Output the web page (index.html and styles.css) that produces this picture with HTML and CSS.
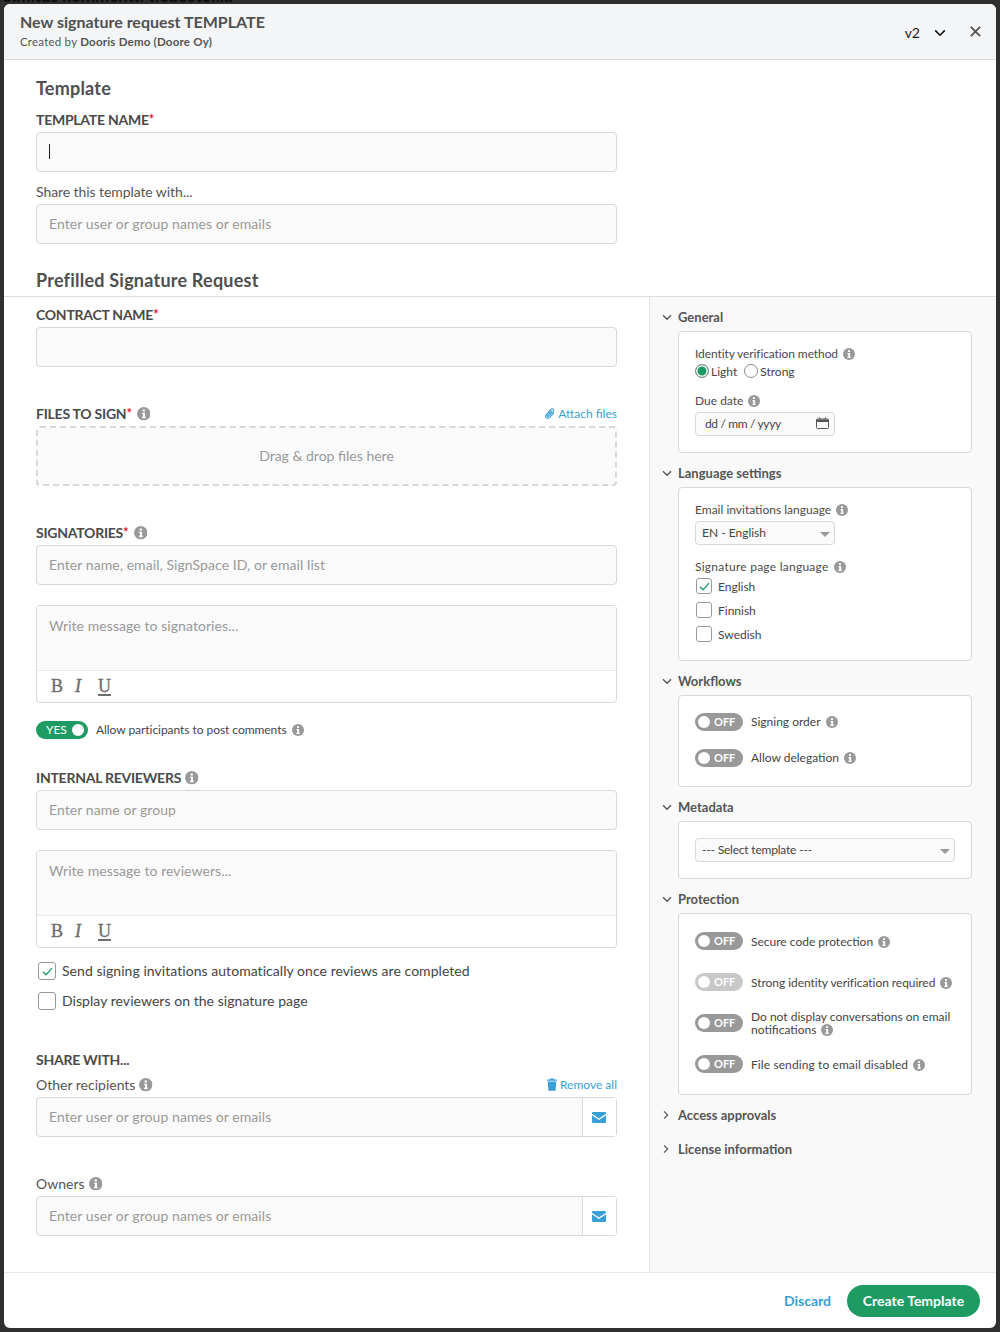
FILE: index.html
```html
<!DOCTYPE html>
<html lang="en">
<head>
<meta charset="utf-8">
<title>New signature request TEMPLATE</title>
<link rel="stylesheet" href="styles.css">
</head>
<body>
<svg class="sprite" aria-hidden="true">
  <symbol id="info" viewBox="0 0 12 12"><circle cx="6" cy="6" r="6" fill="#999"/><path d="M5 2.300h2v1.600H5zM4.500 5h2.600v3.700h.6V10H4.400V8.700h.9V6.300h-.8z" fill="#fff"/></symbol>
  <symbol id="down" viewBox="0 0 12 8"><path d="M1.200 1.400 6 6.200l4.800-4.800" fill="none" stroke="currentColor" stroke-width="1.600"/></symbol>
  <symbol id="right" viewBox="0 0 8 12"><path d="M1.400 1.200 6.200 6l-4.800 4.800" fill="none" stroke="currentColor" stroke-width="1.600"/></symbol>
  <symbol id="tick" viewBox="0 0 12 10"><path d="M1 5.200 4.400 8.600 11 1.200" fill="none" stroke="#1e9b63" stroke-width="1.400"/></symbol>
  <symbol id="mail" viewBox="0 0 14 11"><path d="M1.200 0h11.600A1.200 1.200 0 0 1 14 1.200v.5L7 6.400 0 1.700v-.5A1.200 1.200 0 0 1 1.200 0z" fill="#3a9fd6"/><path d="M0 3.200 7 7.900l7-4.700v6.600a1.200 1.200 0 0 1-1.200 1.200H1.200A1.200 1.200 0 0 1 0 9.800z" fill="#3a9fd6"/></symbol>
</svg>
<div class="backdrop">Toimitus kommentti tiedostoilla</div>
<div class="modal">
  <header class="modal-head">
    <div>
      <div class="modal-title">New signature request TEMPLATE</div>
      <div class="modal-sub">Created by <b>Dooris Demo (Doore Oy)</b></div>
    </div>
    <div class="head-actions">
      <span class="version">v2</span>
      <svg class="version-chev"><use href="#down"/></svg>
      <svg class="close" viewBox="0 0 10 10"><path d="M.8.8l8.400 8.400M9.200.8.8 9.200" fill="none" stroke="#555" stroke-width="1.700"/></svg>
    </div>
  </header>

  <div class="modal-body">
    <section class="template">
      <h2 class="h-template">Template</h2>
      <div class="label caps lbl-name">TEMPLATE NAME<i class="req">*</i></div>
      <div class="input"><span class="caret"></span></div>
      <div class="label lbl-share">Share this template with...</div>
      <div class="input"><span class="ph">Enter user or group names or emails</span></div>
      <h2 class="h-prefilled">Prefilled Signature Request</h2>
    </section>

    <div class="columns">
      <div class="main">
        <div class="label caps">CONTRACT NAME<i class="req">*</i></div>
        <div class="input"></div>

        <div class="label-row gap-38">
          <div class="label caps">FILES TO SIGN<i class="req">*</i><svg class="info"><use href="#info"/></svg></div>
          <a class="link"><svg class="link-icon" viewBox="0 0 12 12"><path d="M9.900 5.400 5.700 9.900c-1 1-2.500 1.100-3.400.3-.9-.9-.8-2.300.2-3.400L7 2c.7-.7 1.700-.8 2.300-.2.600.6.500 1.600-.2 2.300L4.700 8.700c-.4.400-.9.500-1.200.2-.3-.3-.2-.8.200-1.200L7.700 3.500" fill="none" stroke="#3a9fd6" stroke-width="1.100"/></svg>Attach files</a>
        </div>
        <div class="dropzone">Drag &amp; drop files here</div>

        <div class="label caps gap-39">SIGNATORIES<i class="req">*</i><svg class="info"><use href="#info"/></svg></div>
        <div class="input"><span class="ph">Enter name, email, SignSpace ID, or email list</span></div>

        <div class="message">
          <div class="message-text"><span class="ph">Write message to signatories...</span></div>
          <div class="toolbar"><span class="tb-b">B</span><i class="tb-i">I</i><u class="tb-u">U</u></div>
        </div>

        <div class="toggle-row">
          <span class="toggle on"><span class="toggle-text">YES</span><span class="knob"></span></span>
          <span class="toggle-label">Allow participants to post comments</span><svg class="info small"><use href="#info"/></svg>
        </div>

        <div class="label caps gap-31">INTERNAL REVIEWERS<svg class="info"><use href="#info"/></svg></div>
        <div class="input"><span class="ph">Enter name or group</span></div>

        <div class="message">
          <div class="message-text"><span class="ph">Write message to reviewers...</span></div>
          <div class="toolbar"><span class="tb-b">B</span><i class="tb-i">I</i><u class="tb-u">U</u></div>
        </div>

        <div class="check-row first"><span class="check big"><svg><use href="#tick"/></svg></span>Send signing invitations automatically once reviews are completed</div>
        <div class="check-row"><span class="check big"></span>Display reviewers on the signature page</div>

        <div class="label caps gap-42">SHARE WITH...</div>
        <div class="label-row gap-9">
          <div class="label">Other recipients<svg class="info"><use href="#info"/></svg></div>
          <a class="link"><svg class="link-icon" viewBox="0 0 12 13"><path d="M4.300.4h3.400l.4 1H11v1.400H1V1.400h2.900zM1.800 3.600h8.400l-.6 9.200H2.400z" fill="#3a9fd6"/></svg>Remove all</a>
        </div>
        <div class="input addon-input"><span class="ph">Enter user or group names or emails</span><span class="addon"><svg><use href="#mail"/></svg></span></div>

        <div class="label gap-39">Owners<svg class="info"><use href="#info"/></svg></div>
        <div class="input addon-input"><span class="ph">Enter user or group names or emails</span><span class="addon"><svg><use href="#mail"/></svg></span></div>
      </div>

      <aside class="side">
        <section class="sec">
          <div class="sec-head"><svg class="chev"><use href="#down"/></svg>General</div>
          <div class="card card-general">
            <div class="s-label identity">Identity verification method<svg class="info small"><use href="#info"/></svg></div>
            <div class="radios">
              <span class="radio selected"></span><span class="radio-text">Light</span>
              <span class="radio"></span><span class="radio-text">Strong</span>
            </div>
            <div class="s-label due">Due date<svg class="info small"><use href="#info"/></svg></div>
            <div class="s-field date-field"><span class="date-text">dd / mm / yyyy</span>
              <svg class="cal" viewBox="0 0 13 12"><path d="M1.500 2h10a1 1 0 0 1 1 1v7.500a1 1 0 0 1-1 1h-10a1 1 0 0 1-1-1V3a1 1 0 0 1 1-1z" fill="none" stroke="#555"/><path d="M.5 2.500h12V5H.5zM3 .5h1.200V2H3zM8.800.5H10V2H8.800z" fill="#555"/></svg>
            </div>
          </div>
        </section>

        <section class="sec">
          <div class="sec-head"><svg class="chev"><use href="#down"/></svg>Language settings</div>
          <div class="card card-lang">
            <div class="s-label">Email invitations language<svg class="info small"><use href="#info"/></svg></div>
            <div class="s-field"><span>EN - English</span><span class="caret-down"></span></div>
            <div class="s-label sig">Signature page language<svg class="info small"><use href="#info"/></svg></div>
            <div class="s-check"><span class="check"><svg><use href="#tick"/></svg></span>English</div>
            <div class="s-check"><span class="check"></span>Finnish</div>
            <div class="s-check"><span class="check"></span>Swedish</div>
          </div>
        </section>

        <section class="sec">
          <div class="sec-head"><svg class="chev"><use href="#down"/></svg>Workflows</div>
          <div class="card card-work">
            <div class="s-toggle"><span class="toggle"><span class="knob"></span><span class="toggle-text">OFF</span></span><span class="s-text">Signing order<svg class="info small"><use href="#info"/></svg></span></div>
            <div class="s-toggle"><span class="toggle"><span class="knob"></span><span class="toggle-text">OFF</span></span><span class="s-text">Allow delegation<svg class="info small"><use href="#info"/></svg></span></div>
          </div>
        </section>

        <section class="sec">
          <div class="sec-head"><svg class="chev"><use href="#down"/></svg>Metadata</div>
          <div class="card card-meta">
            <div class="s-field wide"><span class="select-text">--- Select template ---</span><span class="caret-down"></span></div>
          </div>
        </section>

        <section class="sec">
          <div class="sec-head"><svg class="chev"><use href="#down"/></svg>Protection</div>
          <div class="card card-prot">
            <div class="s-toggle"><span class="toggle"><span class="knob"></span><span class="toggle-text">OFF</span></span><span class="s-text">Secure code protection<svg class="info small"><use href="#info"/></svg></span></div>
            <div class="s-toggle"><span class="toggle off-dis"><span class="knob"></span><span class="toggle-text">OFF</span></span><span class="s-text nowrap">Strong identity verification required<svg class="info small"><use href="#info"/></svg></span></div>
            <div class="s-toggle"><span class="toggle"><span class="knob"></span><span class="toggle-text">OFF</span></span><span class="s-text two-line">Do not display conversations on email notifications<svg class="info small"><use href="#info"/></svg></span></div>
            <div class="s-toggle"><span class="toggle"><span class="knob"></span><span class="toggle-text">OFF</span></span><span class="s-text file-text">File sending to email disabled<svg class="info small"><use href="#info"/></svg></span></div>
          </div>
        </section>

        <section class="sec">
          <div class="sec-head"><svg class="chev side-chev"><use href="#right"/></svg>Access approvals</div>
        </section>
        <section class="sec">
          <div class="sec-head"><svg class="chev side-chev"><use href="#right"/></svg>License information</div>
        </section>
      </aside>
    </div>
  </div>

  <footer class="modal-foot">
    <a class="discard">Discard</a>
    <a class="primary">Create Template</a>
  </footer>
</div>
</body>
</html>
```
FILE: styles.css
```css
* { box-sizing: border-box; }
html, body { margin: 0; height: 100%; }
body {
  background: #2f2f2f;
  padding: 4px;
  overflow: hidden;
  position: relative;
  font-family: "Lato", "Open Sans", sans-serif;
  color: #4a4a4a;
  font-size: 14px;
}
.sprite { position: absolute; width: 0; height: 0; }
.backdrop {
  position: absolute;
  left: -6px;
  top: -16px;
  font-size: 17px;
  line-height: 24px;
  font-weight: 700;
  color: #0c0c0c;
  white-space: nowrap;
}
.modal {
  position: relative;
  width: 992px;
  height: 1324px;
  background: #fff;
  border-radius: 6px;
  display: flex;
  flex-direction: column;
  overflow: hidden;
}
.modal-head {
  height: 56px;
  flex: none;
  background: #f4f5f7;
  border-bottom: 1px solid #dedede;
  padding: 8px 16px 0;
  display: flex;
  justify-content: space-between;
  align-items: flex-start;
}
.modal-title { font-size: 16px; line-height: 19px; font-weight: 700; color: #505050; }
.modal-sub { font-size: 11.5px; line-height: 14px; margin-top: 4px; color: #555; letter-spacing: .22px; }
.modal-sub b { font-weight: 700; }
.head-actions { display: flex; align-items: center; height: 38px; margin-top: 1px; margin-right: -1px; color: #222; }
.version { font-size: 14px; color: #222; margin-top: 1px; }
.version-chev { width: 12px; height: 8px; margin-left: 14px; color: #111; margin-top: 1px; }
.close { width: 11px; height: 11px; margin-left: 24px; margin-top: -2px; }

.modal-body { flex: 1; display: flex; flex-direction: column; min-height: 0; }
.template { padding: 0 32px; height: 237px; flex: none; border-bottom: 1px solid #dedede; }
.template .input { width: 581px; }
h2 { font-size: 18px; line-height: 22px; font-weight: 700; color: #4f4f4f; margin: 0; letter-spacing: .22px; }
.h-template { padding-top: 17px; height: 40px; margin-bottom: 12px; }
.h-prefilled { margin-top: 25px; }
.lbl-share { margin-top: 12px; margin-bottom: 4px; letter-spacing: -.08px; }

.label { font-size: 14px; line-height: 16px; height: 16px; margin-bottom: 4px; color: #555; display: flex; align-items: center; white-space: nowrap; }
.caps { font-weight: 700; color: #4a4a4a; letter-spacing: -.25px; }
.req { color: #e8112d; font-style: normal; font-size: 13px; align-self: flex-start; margin-top: -1px; letter-spacing: 0; padding-right: 1px; }
.info { width: 13.500px; height: 13.500px; margin-left: 4px; flex: none; vertical-align: -2px; }
.info.small { width: 12px; height: 12px; margin-left: 5px; }

.input {
  height: 40px;
  background: #fafafa;
  border: 1px solid #d8d8d8;
  border-radius: 4px;
  padding: 0 12px 2px;
  display: flex;
  align-items: center;
}
.ph { color: #999; font-size: 14px; letter-spacing: .07px; }
.caret { width: 1px; height: 15px; background: #222; }

.columns { flex: 1; display: flex; min-height: 0; }
.main { width: 645px; flex: none; padding: 10px 32px 0; }
.side { flex: 1; background: #f9f9f9; border-left: 1px solid #e4e4e4; padding: 6px 24px 0 12px; }

.label-row { display: flex; justify-content: space-between; align-items: center; height: 16px; margin-bottom: 4px; }
.label-row .label { margin-bottom: 0; }
.link { color: #3a9fd6; font-size: 12px; display: flex; align-items: center; margin-top: -2px; }
.link-icon { width: 12px; height: 13px; margin-right: 2px; }
.gap-38 { margin-top: 39px; }
.gap-39 { margin-top: 39px; }
.gap-31 { margin-top: 31px; }
.gap-42 { margin-top: 42px; }
.gap-9 { margin-top: 9px; }

.dropzone {
  height: 60px;
  background: #fafafa;
  border: 2px dashed #d8d8d8;
  border-radius: 4px;
  padding-bottom: 2px;
  display: flex;
  align-items: center;
  justify-content: center;
  color: #999;
  font-size: 14px;
}
.message { margin-top: 20px; height: 98px; border: 1px solid #d8d8d8; border-radius: 4px; overflow: hidden; }
.message-text { height: 65px; background: #fafafa; padding: 11px 12px 0; border-bottom: 1px solid #eaeaea; line-height: 17px; }
.toolbar { height: 31px; display: flex; align-items: center; padding: 0 0 0 14px; font-family: "Liberation Serif", serif; font-size: 18px; color: #6e6e6e; }
.tb-b { width: 24px; -webkit-text-stroke: .4px #6e6e6e; }
.tb-i { width: 23px; -webkit-text-stroke: .4px #6e6e6e; }
.tb-u { -webkit-text-stroke: .3px #6e6e6e; text-decoration-thickness: 1.500px; text-underline-offset: 2px; }

.toggle-row { display: flex; align-items: center; height: 18px; margin-top: 18px; font-size: 12px; color: #444; letter-spacing: -.05px; padding-bottom: 1px; }
.toggle {
  width: 48px;
  height: 18px;
  flex: none;
  border-radius: 9px;
  background: #999;
  display: inline-flex;
  align-items: center;
  padding: 0 2px;
  color: #fff;
}
.toggle.on { width: 52px; background: #1e9b63; padding: 0 3px 0 10px; justify-content: space-between; margin-right: 8px; }
.toggle.off-dis { background: #c8c8c8; }
.knob { width: 12px; height: 12px; margin: 0 1px; border-radius: 50%; background: #fff; flex: none; }
.toggle-text { font-size: 11px; font-weight: 700; line-height: 18px; margin-left: 3px; margin-top: -1px; }
.on .toggle-text { margin-left: 0; margin-top: 0; font-size: 12px; font-weight: 400; }

.check-row { display: flex; align-items: center; height: 18px; margin-top: 12px; margin-left: 2px; padding-bottom: 1px; font-size: 14px; color: #444; letter-spacing: .05px; }
.check-row.first { margin-top: 14px; }
.check {
  width: 16px;
  height: 16px;
  flex: none;
  background: #fff;
  border: 1px solid #999;
  border-radius: 3px;
  display: inline-flex;
  align-items: center;
  justify-content: center;
  margin-right: 6px;
}
.check svg { width: 11px; height: 9px; }
.check.big { width: 18px; height: 18px; margin-bottom: -1px; }

.addon-input { padding: 0 0 0 12px; justify-content: space-between; }
.addon-input .ph { margin-top: -2px; }
.addon { width: 34px; height: 38px; padding-right: 2px; border-left: 1px solid #d8d8d8; background: #fff; display: flex; align-items: center; justify-content: center; }
.addon svg { width: 14px; height: 11px; }

.sec { margin-bottom: 6px; }
.sec-head { height: 28px; display: flex; align-items: center; font-size: 13px; font-weight: 700; color: #555; }
.chev { width: 10px; height: 7px; margin-right: 6px; color: #555; }
.side-chev { width: 6px; height: 10px; margin: 0 9px 0 1px; }
.card { width: 294px; margin-left: 16px; background: #fff; border: 1px solid #d8d8d8; border-radius: 4px; padding: 0 16px; font-size: 12px; color: #444; }
.card-general { height: 122px; padding-top: 15px; }
.card-lang { height: 174px; padding-top: 15px; }
.card-work { height: 92px; padding-top: 17px; }
.card-meta { height: 58px; padding-top: 16px; }
.card-prot { height: 182px; padding-top: 18px; }

.s-label { display: flex; align-items: center; line-height: 14px; height: 14px; color: #4a4a4a; }
.identity { letter-spacing: -.1px; }
.radios { display: flex; align-items: center; height: 16px; margin-top: 2px; }
.radio { width: 14px; height: 14px; border-radius: 50%; border: 1px solid #888; background: #fff; margin-right: 2px; flex: none; }
.radio.selected { background: #1e9b63; box-shadow: inset 0 0 0 1.500px #fff; }
.radio-text { margin-right: 7px; }
.due { margin-top: 15px; }
.s-field { width: 140px; height: 24px; margin-top: 4px; background: #fafafa; border: 1px solid #d8d8d8; border-radius: 4px; display: flex; align-items: center; justify-content: space-between; padding: 0 11px 2px 9px; }
.date-field { margin-top: 4px; padding-right: 5px; }
.date-text { letter-spacing: -.35px; }
.select-text { letter-spacing: -.2px; }
.card-lang .s-field { padding-left: 6px; margin-top: 4px; }
.s-field.wide { width: 260px; margin-top: 0; padding-left: 6px; }
.cal { width: 13px; height: 12px; }
.caret-down { width: 0; height: 0; border: 5px solid transparent; border-top: 5px solid #999; border-bottom: 0; margin: 5px -7px 0 0; }
.sig { margin-top: 15px; letter-spacing: .25px; }
.s-check { display: flex; align-items: center; height: 16px; margin-top: 8px; }
.sig + .s-check { margin-top: 4px; }
.s-check .check { margin-right: 6px; margin-left: 1px; }

.s-toggle { display: flex; align-items: center; height: 18px; margin-bottom: 18px; }
.s-text { margin-left: 8px; display: block; line-height: 13px; padding-bottom: 1px; }
.card-prot .s-toggle { margin-bottom: 23px; }
.card-prot .s-text { padding-bottom: 0; }
.card-prot .two-line { padding-bottom: 1px; }
.two-line { width: 210px; }
.nowrap { white-space: nowrap; letter-spacing: -.05px; }
.file-text { letter-spacing: .1px; }

.modal-foot { height: 56px; flex: none; border-top: 1px solid #e6e6e6; display: flex; align-items: center; justify-content: flex-end; padding: 0 16px 0 0; }
.discard { color: #3a9fd6; font-size: 14px; font-weight: 700; margin-right: 16px; }
.primary { width: 133px; height: 32px; border-radius: 16px; background: #1e9b63; color: #fff; font-size: 14px; font-weight: 700; display: flex; align-items: center; justify-content: center; }
```
